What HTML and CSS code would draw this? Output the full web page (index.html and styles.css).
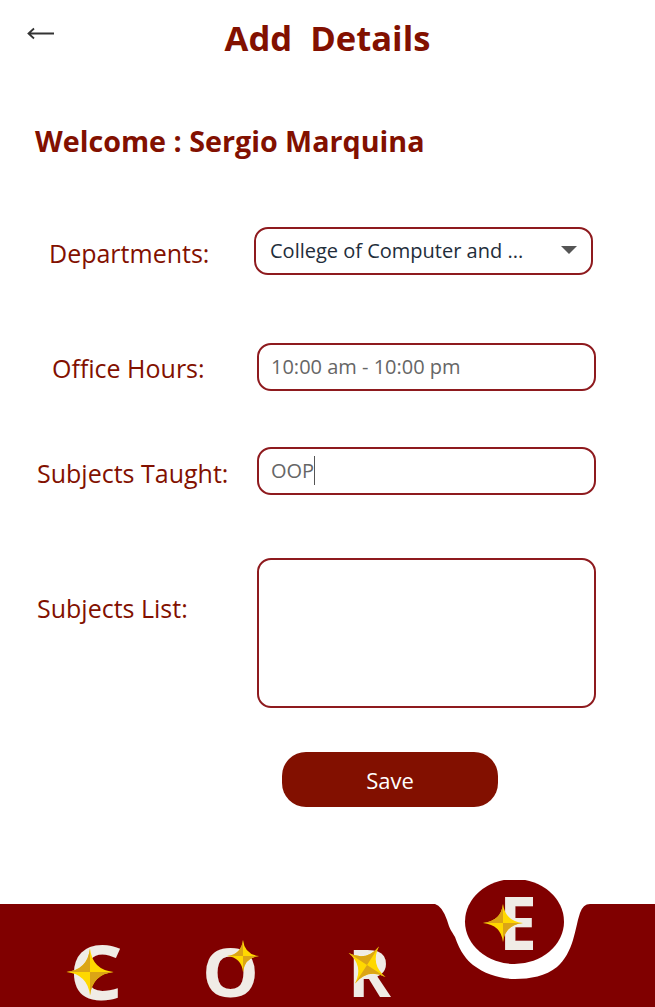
FILE: index.html
```html
<!DOCTYPE html>
<html lang="en">

<head>
    <meta charset="UTF-8">
    <meta name="viewport" content="width=device-width, initial-scale=1.0">
    <title>Add Details</title>
    <link rel="stylesheet" href="styles.css">
</head>

<body>
    <div class="page">
        <header class="topbar">
            <svg class="back" width="28" height="14" viewBox="0 0 28 14">
                <path d="M27 6.5H2M7 1.5L1.5 6.5L7 11.5" fill="none" stroke="#333" stroke-width="1.8" />
            </svg>
            <h1 class="title">Add  Details</h1>
        </header>

        <h2 class="welcome">Welcome : Sergio Marquina</h2>

        <form class="details">
            <div class="row row-dept">
                <label class="label">Departments:</label>
                <div class="field field-select">
                    <span>College of Computer and ...</span>
                    <i class="arrow"></i>
                </div>
            </div>
            <div class="row row-hours">
                <label class="label">Office Hours:</label>
                <div class="field field-muted">10:00 am - 10:00 pm</div>
            </div>
            <div class="row row-taught">
                <label class="label">Subjects Taught:</label>
                <div class="field field-muted">OOP<span class="caret"></span></div>
            </div>
            <div class="row row-list">
                <label class="label">Subjects List:</label>
                <div class="field field-area"></div>
            </div>
            <div class="actions">
                <button type="button" class="save">Save</button>
            </div>
        </form>

        <footer class="navbar">
            <svg width="655" height="127" viewBox="0 0 655 127">
                <defs>
                    <g id="star">
                        <path d="M0 -50Q5 -5 50 0Q5 5 0 50Q-5 5 -50 0Q-5 -5 0 -50Z" fill="#ffd800" />
                        <path d="M0 0L50 0Q5 5 0 50ZM0 0L-50 0Q-5 -5 0 -50Z" fill="#dba516" />
                    </g>
                </defs>
                <path d="M0 24H435Q442 26 447 40C450 50 451 50 455 57C460 72 467 80 473 85C485 94 500 99 515 99C530 99 546 96 557 87C565 80 570 70 573 60C576 50 577 42 580 33Q583 24 590 24H655V127H0Z" fill="#800000" />
                <ellipse cx="514.5" cy="41.5" rx="49.5" ry="42.5" fill="#800000" />

                <text class="logo-letter" x="69" y="120" font-size="76" textLength="54" lengthAdjust="spacingAndGlyphs">C</text>
                <text class="logo-letter" x="202" y="117" font-size="66" textLength="57" lengthAdjust="spacingAndGlyphs">O</text>
                <text class="logo-letter" x="348" y="117" font-size="67" textLength="43" lengthAdjust="spacingAndGlyphs">R</text>
                <text class="logo-letter" x="499" y="70" font-size="73" textLength="38" lengthAdjust="spacingAndGlyphs">E</text>

                <use href="#star" transform="translate(90 92) scale(.47)" />
                <use href="#star" transform="translate(243 76) scale(.32)" />
                <use href="#star" transform="translate(367 85) rotate(33) scale(.44)" />
                <use href="#star" transform="translate(503 43) scale(.4 .38)" />
            </svg>
        </footer>
    </div>
</body>

</html>
```

FILE: styles.css
```css
* {
    box-sizing: border-box;
}

body {
    margin: 0;
    font-family: "Open Sans", "Noto Sans", sans-serif;
    background: #fff;
}

.page {
    display: flex;
    flex-direction: column;
    height: 1007px;
    overflow: hidden;
}

.topbar {
    position: relative;
    padding-top: 14px;
    text-align: center;
}

.back {
    position: absolute;
    top: 27px;
    left: 27px;
}

.title {
    margin: 0;
    font-size: 34.6px;
    line-height: 48px;
    font-weight: 700;
    color: #821000;
    white-space: pre;
}

.welcome {
    margin: 59px 0 0 35px;
    font-size: 28.7px;
    line-height: 40px;
    font-weight: 700;
    color: #821000;
}

.details {
    display: flex;
    flex-direction: column;
    margin-top: 66px;
}

.row {
    display: grid;
    grid-template-columns: 257px 339px;
    align-items: center;
}

.row-dept {
    grid-template-columns: 254px 339px;
}

.row-hours {
    margin-top: 68px;
}

.row-taught {
    margin-top: 56px;
}

.row-list {
    margin-top: 63px;
    align-items: start;
}

.label {
    font-size: 25px;
    color: #821000;
    white-space: nowrap;
    padding: 3px 0 0 37px;
}

.row-dept .label {
    padding-left: 49px;
}

.row-hours .label {
    padding-left: 52px;
    padding-top: 2px;
}

.row-list .label {
    padding-top: 33px;
}

.field {
    display: flex;
    align-items: center;
    height: 48px;
    padding: 0 12px 2px;
    border: 2px solid #8e1a1e;
    border-radius: 14px;
    font-size: 20px;
    color: #222d3a;
    background: #fff;
}

.field-select {
    justify-content: space-between;
    padding-left: 14px;
    padding-right: 14px;
}

.field-muted {
    color: #666;
}

.field-area {
    height: 150px;
}

.arrow {
    width: 0;
    height: 0;
    border-left: 8px solid transparent;
    border-right: 8px solid transparent;
    border-top: 8px solid #555;
}

.caret {
    width: 1px;
    height: 29px;
    margin-left: 0;
    background: #555;
}

.actions {
    display: flex;
    margin: 44px 0 0 282px;
}

.save {
    width: 216px;
    height: 55px;
    border: 0;
    border-radius: 24px;
    background: #821000;
    color: #fff;
    font-family: inherit;
    font-size: 22px;
}

.navbar {
    margin-top: auto;
    height: 127px;
    line-height: 0;
}

.logo-letter {
    font-family: "Open Sans", sans-serif;
    font-weight: 700;
    fill: #f0ece6;
}
```
